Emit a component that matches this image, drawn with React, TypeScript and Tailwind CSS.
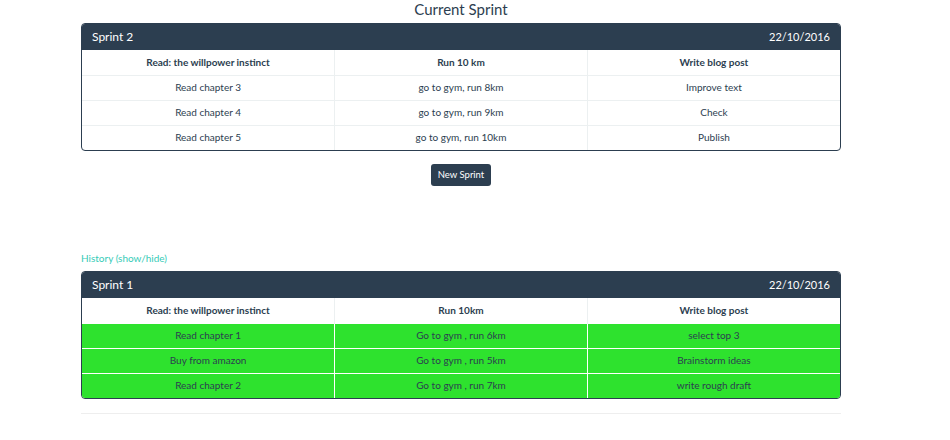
const current = {
  name: "Sprint 2",
  date: "22/10/2016",
  heads: ["Read: the willpower instinct", "Run 10 km", "Write blog post"],
  rows: [
    ["Read chapter 3", "go to gym, run 8km", "Improve text"],
    ["Read chapter 4", "go to gym, run 9km", "Check"],
    ["Read chapter 5", "go to gym, run 10km", "Publish"],
  ],
};

const history = {
  name: "Sprint 1",
  date: "22/10/2016",
  heads: ["Read: the willpower instinct", "Run 10km", "Write blog post"],
  rows: [
    ["Read chapter 1", "Go to gym , run 6km", "select top 3"],
    ["Buy from amazon", "Go to gym , run 5km", "Brainstorm ideas"],
    ["Read chapter 2", "Go to gym , run 7km", "write rough draft"],
  ],
};

type Sprint = typeof current;

function SprintPanel({ sprint, done }: { sprint: Sprint; done?: boolean }) {
  return (
    <div className="border border-[#2c3e50] rounded-[4px] overflow-hidden">
      <div className="bg-[#2c3e50] text-white flex justify-between items-center h-[26px] px-[10px] text-[12px]">
        <span>{sprint.name}</span>
        <span className="text-[11px]">{sprint.date}</span>
      </div>
      <table className="w-full table-fixed border-collapse text-[10px] text-[#2c3e50]">
        <thead>
          <tr className="h-[25px]">
            {sprint.heads.map((h, i) => (
              <th key={i} className={`font-bold text-center ${i > 0 ? "border-l border-[#ecf0f1]" : ""}`}>
                {h}
              </th>
            ))}
          </tr>
        </thead>
        <tbody>
          {sprint.rows.map((r, ri) => (
            <tr
              key={ri}
              className={
                done
                  ? "h-[25px] bg-[#2ee22e] border-t border-white"
                  : "h-[25px] border-t border-[#ecf0f1]"
              }
            >
              {r.map((c, ci) => (
                <td
                  key={ci}
                  className={`text-center ${ci > 0 ? (done ? "border-l border-white" : "border-l border-[#ecf0f1]") : ""}`}
                >
                  {c}
                </td>
              ))}
            </tr>
          ))}
        </tbody>
      </table>
    </div>
  );
}

export default function App() {
  return (
    <div className="w-[950px] h-[440px] bg-white font-['Lato','Liberation_Sans',sans-serif] text-[#2c3e50]">
      <div className="w-[760px] ml-[81px]">
        <h2 className="text-center text-[15px] leading-[18px] h-[23px]">Current Sprint</h2>
        <SprintPanel sprint={current} />
        <div className="flex justify-center mt-[13px]">
          <button className="bg-[#2c3e50] text-white text-[9.5px] h-[22px] px-[7px] rounded-[3px]">
            New Sprint
          </button>
        </div>
        <div className="h-[66px]" />
        <a className="block text-[10px] text-[#35cbb7] leading-[13px]">History (show/hide)</a>
        <div className="h-[6px]" />
        <SprintPanel sprint={history} done />
        <hr className="mt-[14px] border-t border-[#eeeeee]" />
      </div>
    </div>
  );
}
